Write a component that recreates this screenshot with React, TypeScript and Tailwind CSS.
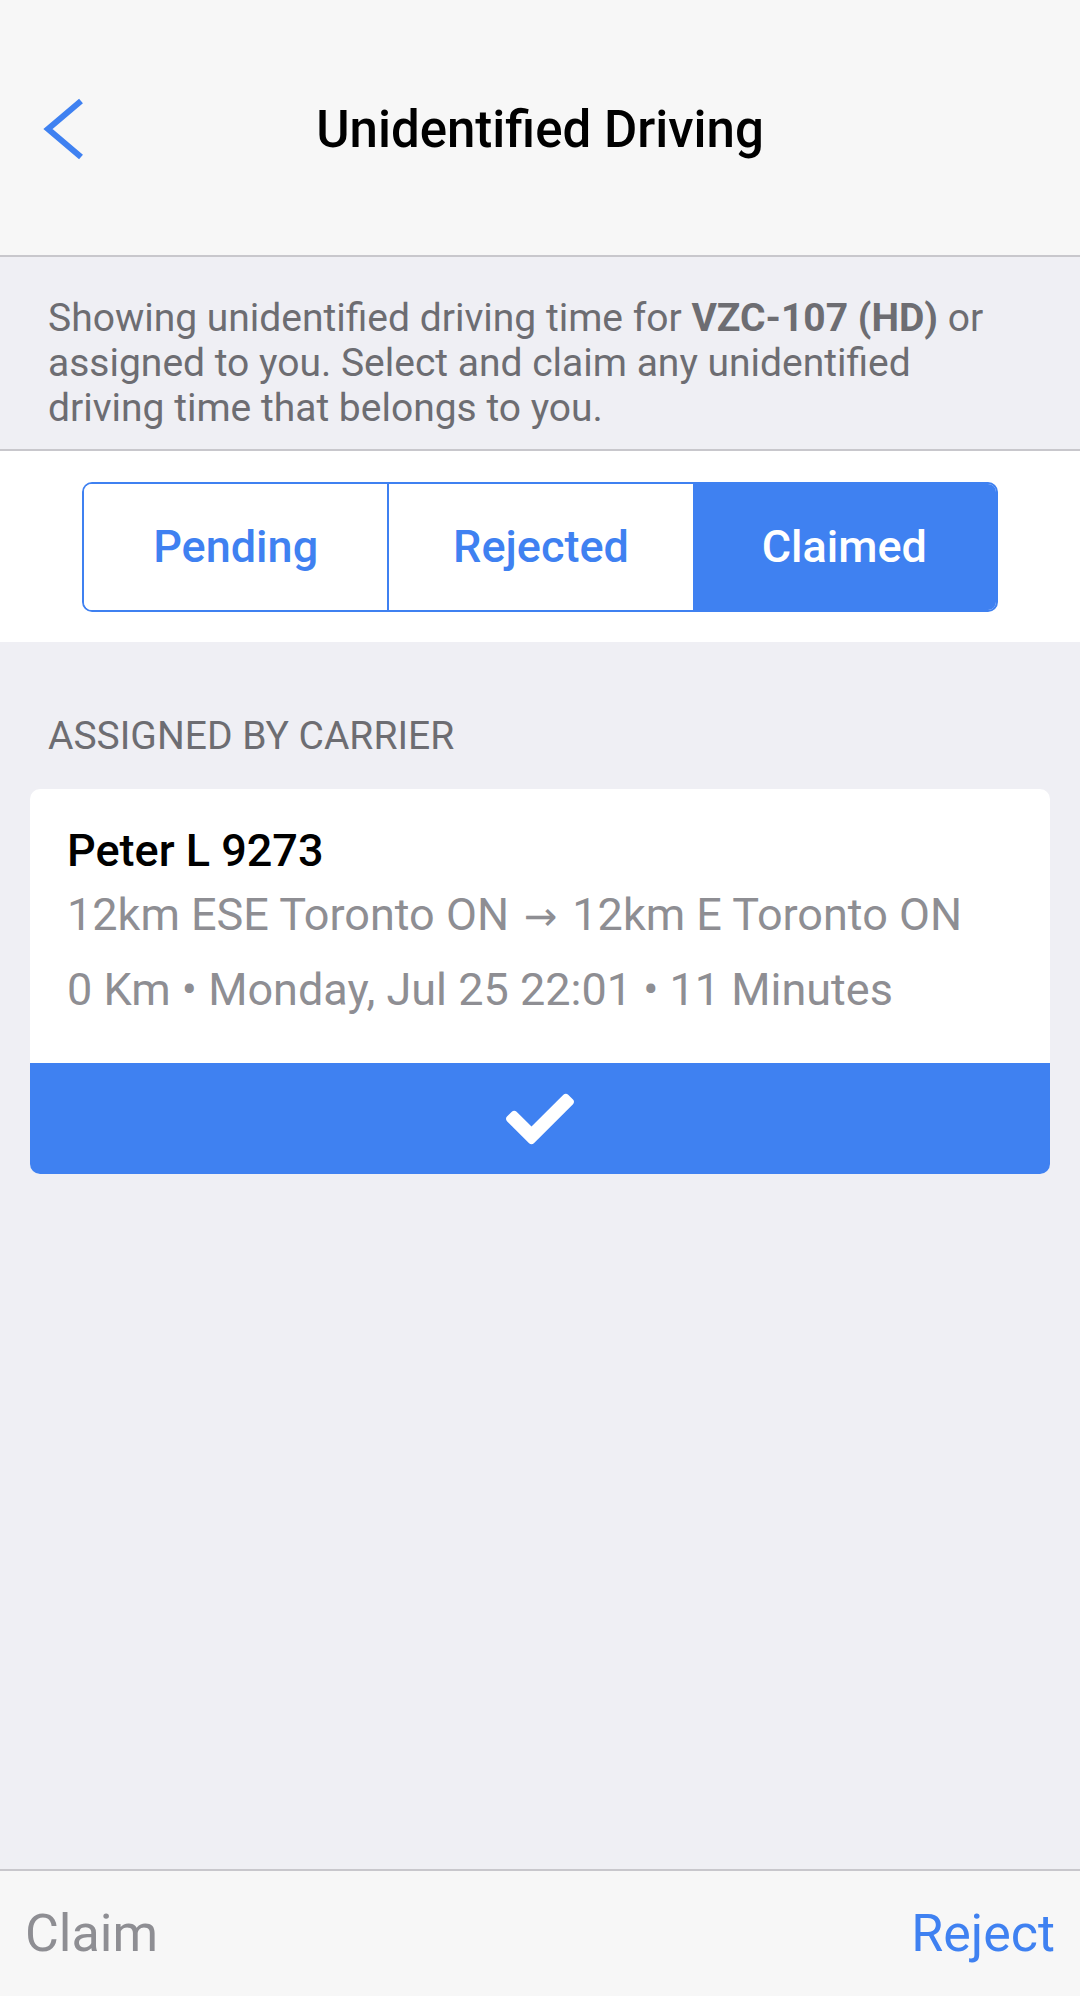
import { FaCheck } from "react-icons/fa";

const tabs = ["Pending", "Rejected", "Claimed"];

export default function App() {
  const active = "Claimed";

  return (
    <div className="h-[1996px] w-full flex flex-col bg-[#efeff4] font-['Roboto',sans-serif]">
      {/* Header */}
      <div className="relative h-[257px] shrink-0 flex items-center justify-center bg-[#f7f7f7] border-b-2 border-[#c8c7cc]">
        <button className="absolute left-[41px] top-[98px]">
          <svg width="44" height="62" viewBox="0 0 44 62" fill="none">
            <polyline points="40,3 7,31 40,59" stroke="#3f81f1" strokeWidth="6" />
          </svg>
        </button>
        <h1 className="text-[51px] font-medium text-black leading-none mt-[3px]">Unidentified Driving</h1>
      </div>

      {/* Description */}
      <div className="shrink-0 px-[48px] pt-[39px] pb-[18px] border-b-2 border-[#c8c7cc] text-[39px] leading-[45px] text-[#6d6d72]">
        Showing unidentified driving time for <span className="font-bold">VZC-107 (HD)</span> or assigned to you. Select and claim any unidentified driving time that belongs to you.
      </div>

      {/* Segmented control */}
      <div className="shrink-0 bg-white px-[82px] pt-[31px] pb-[30px]">
        <div className="flex h-[130px] rounded-[10px] border-[2.5px] border-[#3f81f1] overflow-hidden">
          {tabs.map((t, i) => (
            <div
              key={t}
              className={
                "flex-1 flex items-center justify-center text-[45px] font-medium " +
                (t === active ? "bg-[#3f81f1] text-white" : "bg-white text-[#3f81f1]") +
                (i === 0 ? " border-r-2 border-[#3f81f1]" : "")
              }
            >
              {t}
            </div>
          ))}
        </div>
      </div>

      {/* List */}
      <div className="flex-1 px-[30px]">
        <p className="mt-[73px] px-[18px] text-[39px] leading-[43px] text-[#6d6d72]">ASSIGNED BY CARRIER</p>

        <div className="mt-[31px] bg-white rounded-[10px] overflow-hidden">
          <div className="px-[37px] pt-[36px] pb-[47px]">
            <p className="text-[45px] leading-[52px] font-medium text-black">Peter L 9273</p>
            <p className="mt-[12px] text-[45px] leading-[52px] text-[#8e8e93]">
              12km ESE Toronto ON <span className="font-['DejaVu_Sans',sans-serif] text-[40px] inline-block w-[41px] text-center">→</span> 12km E Toronto ON
            </p>
            <p className="mt-[22px] text-[45px] leading-[52px] text-[#8e8e93]">0 Km • Monday, Jul 25 22:01 • 11 Minutes</p>
          </div>
          <div className="h-[111px] bg-[#3f81f1] flex items-center justify-center">
            <FaCheck size={68} color="white" />
          </div>
        </div>
      </div>

      {/* Bottom bar */}
      <div className="shrink-0 h-[127px] border-t-2 border-[#c8c7cc] bg-[#f7f7f7] flex items-center justify-between px-[25px]">
        <button className="text-[52px] text-[#8e8e93]">Claim</button>
        <button className="text-[52px] text-[#3f81f1]">Reject</button>
      </div>
    </div>
  );
}
